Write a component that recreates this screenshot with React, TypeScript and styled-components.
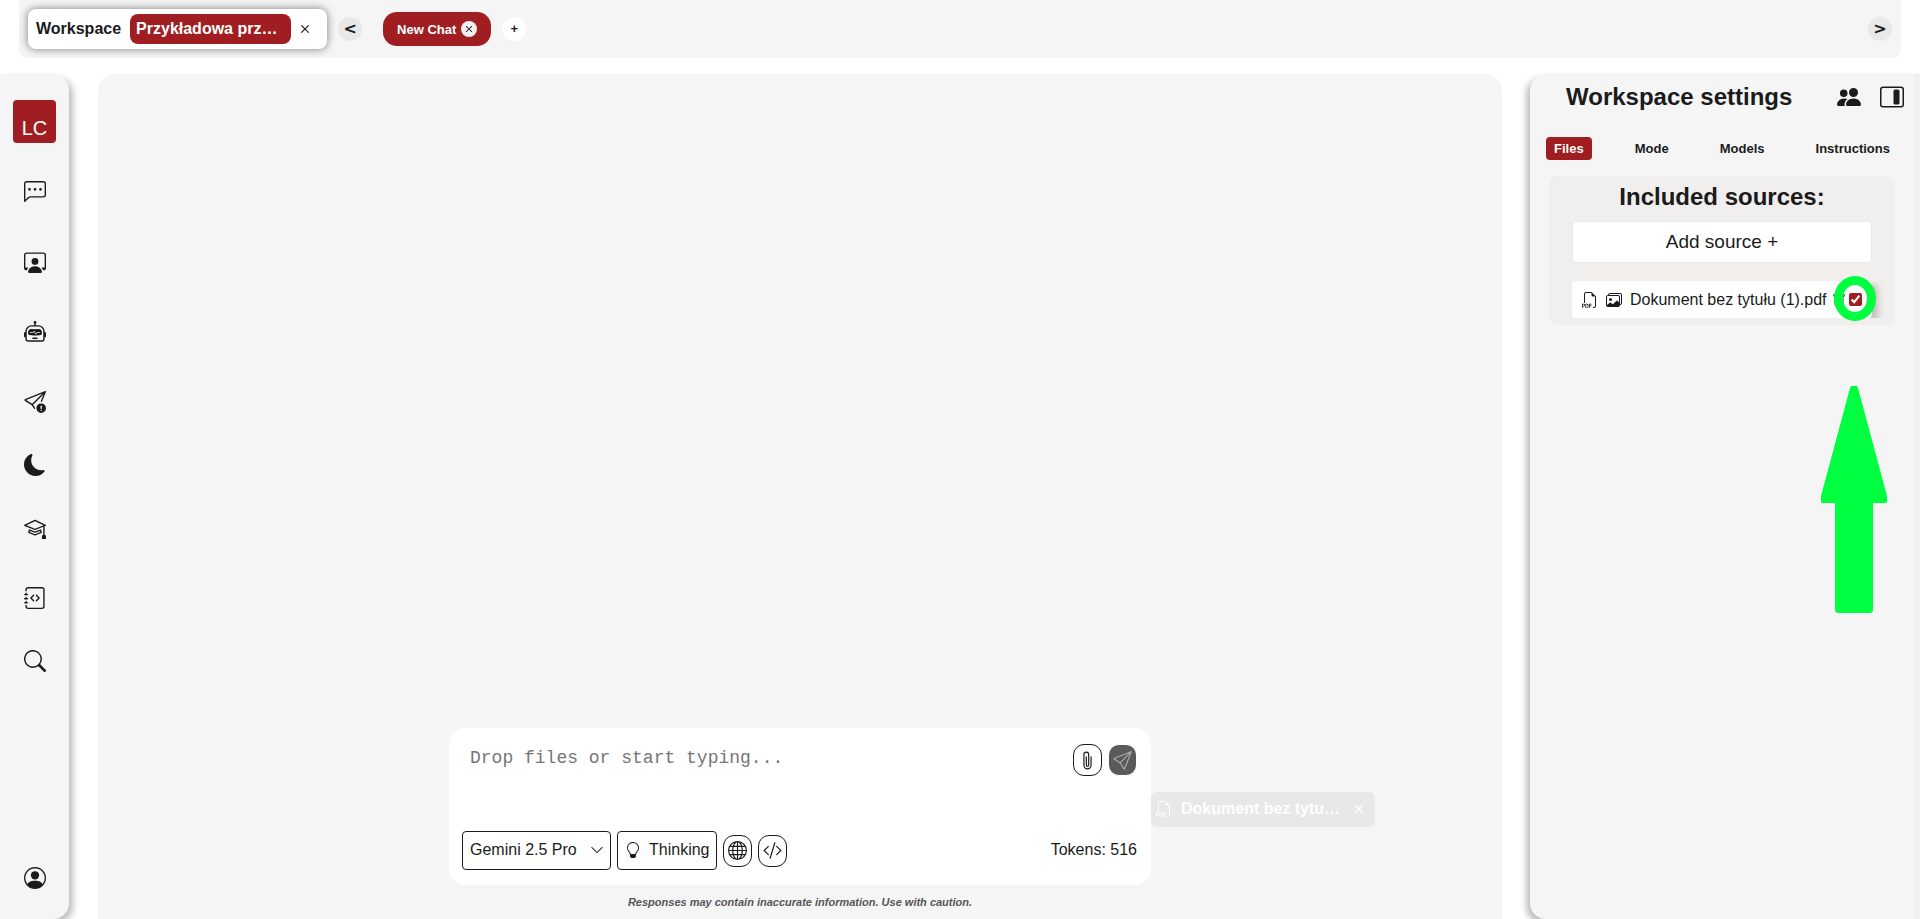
import React from "react";
import styled, { createGlobalStyle } from "styled-components";
import {
  BsChatLeftDots,
  BsChevronDown,
  BsCodeSlash,
  BsFiletypePdf,
  BsGlobe,
  BsImages,
  BsJournalCode,
  BsLayoutSidebarInsetReverse,
  BsLightbulb,
  BsMoonFill,
  BsMortarboard,
  BsPaperclip,
  BsPeopleFill,
  BsPersonCircle,
  BsPersonWorkspace,
  BsRobot,
  BsSearch,
  BsSend,
  BsSendExclamation,
  BsTrash,
  BsX,
} from "react-icons/bs";

const color = {
  panel: "#f5f5f5",
  ink: "#1b1b1b",
  red: "#a01d22",
  muted: "#e8e8e8",
  marker: "#00ff40",
};

const GlobalStyle = createGlobalStyle`
  *, *::before, *::after { box-sizing: border-box; }
  body { margin: 0; background: #fff; color: ${color.ink}; overflow: hidden; }
  body, button, select { font-family: "Liberation Sans", Arial, sans-serif; font-size: 16px; }
  button, select { margin: 0; padding: 0; border: 0; color: inherit; background: none; cursor: pointer; }
  svg { display: block; flex: none; }
`;

const Page = styled.div`
  display: flex;
  flex-direction: column;
  height: 100vh;
`;

const TopBar = styled.header`
  display: flex;
  align-items: center;
  margin: 0 19px 16px;
  padding: 9px;
  background: ${color.panel};
  border-radius: 0 0 8px 8px;
`;

const WorkspaceTab = styled.div`
  display: flex;
  align-items: center;
  height: 40px;
  padding: 0 14px 0 8px;
  gap: 6px;
  background: #fff;
  border-radius: 8px;
  box-shadow: 0 0 8px rgba(0, 0, 0, 0.5);
  font-weight: bold;
`;

const WorkspaceName = styled.button`
  height: 30px;
  width: 161px;
  margin-left: 3px;
  padding: 0 6px;
  text-align: left;
  font-weight: bold;
  color: #fff;
  background: ${color.red};
  border-radius: 8px;
`;

const CloseButton = styled.button`
  display: flex;
  align-items: center;
  justify-content: center;
  width: 16px;
  height: 16px;
`;

const RoundButton = styled.button<{ $fill: string }>`
  width: 24px;
  height: 24px;
  border-radius: 50%;
  background: ${(p) => p.$fill};
  font-size: 13px;
  line-height: 24px;
  font-weight: bold;
`;

const ArrowButton = styled(RoundButton)`
  font-family: "DejaVu Sans", sans-serif;
  font-size: 16px;
  line-height: 22px;
`;

const ChatTabs = styled.nav`
  display: flex;
  align-items: center;
  gap: 11px;
  flex: 1;
  margin-left: 11px;
`;

const ChatTab = styled.div`
  display: flex;
  align-items: center;
  gap: 5px;
  height: 34px;
  margin-left: 10px;
  padding: 0 14px;
  border-radius: 14px;
  color: #fff;
  background: ${color.red};
`;

const ChatName = styled.button`
  font-size: 13px;
  font-weight: bold;
`;

const ChatClose = styled(CloseButton)`
  border-radius: 50%;
  color: ${color.ink};
  background: #f0f0f0;
`;

const Body = styled.div`
  display: flex;
  flex: 1;
  min-height: 0;
`;

const Sidebar = styled.nav`
  display: flex;
  flex-direction: column;
  align-items: center;
  width: 69px;
  padding: 26px 0 30px;
  background: ${color.panel};
  border-radius: 0 16px 16px 0;
  box-shadow: 4px 4px 6px rgba(0, 0, 0, 0.25);
`;

const Logo = styled.a`
  display: flex;
  align-items: flex-end;
  justify-content: center;
  width: 43px;
  height: 43px;
  margin-bottom: 38px;
  padding-bottom: 3px;
  border-radius: 4px;
  color: #fff;
  background: ${color.red};
  font-size: 20px;
  text-decoration: none;
`;

const SideButton = styled.button<{ $tight?: boolean }>`
  margin-bottom: ${(p) => (p.$tight ? 41 : 48)}px;
`;

const AccountButton = styled.button`
  margin-top: auto;
`;

const Main = styled.main`
  display: flex;
  flex-direction: column;
  justify-content: flex-end;
  flex: 1;
  margin: 0 28px 0 29px;
  padding-bottom: 10px;
  background: ${color.panel};
  border-radius: 16px 16px 0 0;
`;

const ComposerRow = styled.div`
  display: grid;
  grid-template-columns: 1fr 50% 1fr;
`;

const Composer = styled.form`
  display: flex;
  flex-direction: column;
  justify-content: space-between;
  grid-column: 2;
  padding: 16px 14px 15px 13px;
  height: 157px;
  background: #fff;
  border-radius: 16px;
`;

const Line = styled.div<{ $top?: boolean }>`
  display: flex;
  align-items: ${(p) => (p.$top ? "flex-start" : "center")};
  gap: 6px;
`;

const Prompt = styled.textarea`
  flex: 1;
  height: 60px;
  padding: 3px 8px;
  border: 0;
  outline: 0;
  resize: none;
  color: ${color.ink};
  background: none;
  font: 18px/22px "Liberation Mono", "Courier New", monospace;
  &::placeholder { color: #767676; }
`;

const ToolButton = styled.button<{ $dark?: boolean }>`
  display: flex;
  align-items: center;
  justify-content: center;
  width: 29px;
  height: 32px;
  border: 1px solid ${(p) => (p.$dark ? "#fff" : color.ink)};
  border-radius: 11px;
  color: ${(p) => (p.$dark ? "#a8a8a8" : color.ink)};
  background: ${(p) => (p.$dark ? "#5a5a5a" : "#fff")};
`;

const ModelPicker = styled.label`
  position: relative;
  display: flex;
  width: 149px;
  svg {
    position: absolute;
    right: 7px;
    top: 12px;
    pointer-events: none;
  }
`;

const ModelSelect = styled.select`
  appearance: none;
  width: 100%;
  height: 39px;
  padding: 0 7px 2px;
  border: 1px solid ${color.ink};
  border-radius: 4px;
`;

const ThinkingButton = styled.button`
  display: flex;
  align-items: center;
  gap: 8px;
  height: 39px;
  padding: 0 7px 2px;
  border: 1px solid ${color.ink};
  border-radius: 4px;
`;

const Tokens = styled.span`
  margin-left: auto;
  padding-bottom: 2px;
`;

const Attachment = styled.div`
  display: flex;
  align-items: center;
  justify-self: start;
  height: 35px;
  margin-top: 64px;
  padding: 0 8px 2px 5px;
  gap: 9px;
  border-radius: 6px;
  color: #fff;
  background: ${color.muted};
  font-weight: bold;
  ${CloseButton} { margin-left: 2px; }
`;

const Disclaimer = styled.p`
  margin: 11px 0 0;
  text-align: center;
  color: #555;
  font-size: 11px;
  line-height: 13px;
  font-weight: bold;
  font-style: italic;
`;

const Settings = styled.aside`
  position: relative;
  width: 390px;
  padding: 9px 22px 0 16px;
  background: ${color.panel};
  border-right: 6px solid #f0f0f0;
  border-radius: 16px 0 0 16px;
  box-shadow: -4px 4px 6px rgba(0, 0, 0, 0.25);
`;

const SettingsHead = styled.div`
  display: flex;
  align-items: center;
  height: 28px;
  margin: 0 -12px 0 20px;
`;

const Heading = styled.h2`
  margin: 0;
  font-size: 24px;
  line-height: 28px;
`;

const HeadActions = styled.div`
  display: flex;
  gap: 19px;
  margin-left: auto;
`;

const SettingsTabs = styled.div`
  display: flex;
  justify-content: space-between;
  margin: 26px -6px 16px 0;
`;

const SettingsTab = styled.button<{ $active?: boolean }>`
  height: 23px;
  padding: 0 8px;
  border-radius: 4px;
  font-size: 13px;
  font-weight: bold;
  color: ${(p) => (p.$active ? "#fff" : color.ink)};
  background: ${(p) => (p.$active ? color.red : "none")};
`;

const Sources = styled.section`
  display: flex;
  flex-direction: column;
  margin: 0 -3px 0 3px;
  padding: 7px 23px;
  border-radius: 8px;
  background: #f0efee;
  text-align: center;
`;

const AddSource = styled.button`
  height: 42px;
  margin: 10px 0 18px;
  border: 1px solid #e8e8e8;
  border-radius: 4px;
  background: #fff;
  font-size: 19px;
`;

const SourceRow = styled.div`
  display: flex;
  align-items: center;
  height: 37px;
  padding: 0 10px;
  gap: 5px;
  border-radius: 4px;
  background: #fff;
  box-shadow: 6px 4px 6px rgba(0, 0, 0, 0.2);
  clip-path: inset(0 -12px 0 0);
`;

const SourceFile = styled.div`
  display: flex;
  align-items: center;
  gap: 8px;
`;

const SourceName = styled.label`
  white-space: nowrap;
`;

const SourceActions = styled.div`
  display: flex;
  align-items: center;
  gap: 3px;
`;

const SourceItem = styled.div`
  position: relative;
`;

const CheckMark = styled.svg`
  position: absolute;
  right: -4px;
  top: -5px;
  pointer-events: none;
`;

const Check = styled.input`
  width: 13px;
  height: 13px;
  margin: 0;
  accent-color: ${color.red};
`;

const ArrowMark = styled.svg`
  position: absolute;
  top: 312px;
  right: 27px;
`;

export default function App() {
  return (
    <>
      <GlobalStyle />
      <Page>
        <TopBar>
          <WorkspaceTab>
            <span>Workspace</span>
            <WorkspaceName>Przykładowa prz…</WorkspaceName>
            <CloseButton aria-label="Close workspace">
              <BsX size={18} />
            </CloseButton>
          </WorkspaceTab>
          <ChatTabs>
            <ArrowButton $fill={color.muted} aria-label="Previous chats">&lt;</ArrowButton>
            <ChatTab>
              <ChatName>New Chat</ChatName>
              <ChatClose aria-label="Close chat">
                <BsX size={14} />
              </ChatClose>
            </ChatTab>
            <RoundButton $fill="#fff" aria-label="Add chat">+</RoundButton>
          </ChatTabs>
          <ArrowButton $fill={color.muted} aria-label="Next chats">&gt;</ArrowButton>
        </TopBar>

        <Body>
          <Sidebar aria-label="Main">
            <Logo href="#">LC</Logo>
            <SideButton aria-label="Chats"><BsChatLeftDots size={22} /></SideButton>
            <SideButton aria-label="Workspaces"><BsPersonWorkspace size={22} /></SideButton>
            <SideButton aria-label="Assistants"><BsRobot size={22} /></SideButton>
            <SideButton $tight aria-label="Report"><BsSendExclamation size={22} /></SideButton>
            <SideButton $tight aria-label="Dark mode"><BsMoonFill size={22} /></SideButton>
            <SideButton aria-label="Tutorials"><BsMortarboard size={22} /></SideButton>
            <SideButton $tight aria-label="Documentation"><BsJournalCode size={22} /></SideButton>
            <SideButton $tight aria-label="Search"><BsSearch size={22} /></SideButton>
            <AccountButton aria-label="Account"><BsPersonCircle size={22} /></AccountButton>
          </Sidebar>

          <Main>
            <ComposerRow>
              <Composer onSubmit={(e) => e.preventDefault()}>
                <Line $top>
                  <Prompt aria-label="Message" placeholder="Drop files or start typing..." />
                  <ToolButton type="button" aria-label="Attach file">
                    <BsPaperclip size={19} />
                  </ToolButton>
                  <ToolButton $dark aria-label="Send">
                    <BsSend size={19} />
                  </ToolButton>
                </Line>
                <Line>
                  <ModelPicker>
                    <ModelSelect aria-label="Model">
                      <option>Gemini 2.5 Pro</option>
                    </ModelSelect>
                    <BsChevronDown size={14} />
                  </ModelPicker>
                  <ThinkingButton type="button">
                    <BsLightbulb size={16} />
                    Thinking
                  </ThinkingButton>
                  <ToolButton type="button" aria-label="Web search">
                    <BsGlobe size={19} />
                  </ToolButton>
                  <ToolButton type="button" aria-label="Code">
                    <BsCodeSlash size={19} />
                  </ToolButton>
                  <Tokens>Tokens: 516</Tokens>
                </Line>
              </Composer>
              <Attachment>
                <BsFiletypePdf size={16} />
                <span>Dokument bez tytu…</span>
                <CloseButton aria-label="Remove file">
                  <BsX size={20} />
                </CloseButton>
              </Attachment>
            </ComposerRow>
            <Disclaimer>Responses may contain inaccurate information. Use with caution.</Disclaimer>
          </Main>

          <Settings>
            <SettingsHead>
              <Heading>Workspace settings</Heading>
              <HeadActions>
                <button aria-label="Members"><BsPeopleFill size={24} /></button>
                <button aria-label="Toggle panel"><BsLayoutSidebarInsetReverse size={24} /></button>
              </HeadActions>
            </SettingsHead>
            <SettingsTabs>
              <SettingsTab $active>Files</SettingsTab>
              <SettingsTab>Mode</SettingsTab>
              <SettingsTab>Models</SettingsTab>
              <SettingsTab>Instructions</SettingsTab>
            </SettingsTabs>
            <Sources>
              <Heading>Included sources:</Heading>
              <AddSource>Add source +</AddSource>
              <SourceItem>
                <SourceRow>
                  <SourceFile>
                    <BsFiletypePdf size={16} />
                    <BsImages size={16} />
                    <SourceName htmlFor="source-1">Dokument bez tytułu (1).pdf</SourceName>
                  </SourceFile>
                  <SourceActions>
                    <button aria-label="Delete source"><BsTrash size={14} /></button>
                    <Check id="source-1" type="checkbox" defaultChecked />
                  </SourceActions>
                </SourceRow>
                <CheckMark width="42" height="45" viewBox="0 0 42 45" fill="none">
                  <ellipse cx="21" cy="22.5" rx="16.5" ry="18" stroke={color.marker} strokeWidth="9" />
                </CheckMark>
              </SourceItem>
            </Sources>
            <ArrowMark width="66" height="227" viewBox="0 0 66 227" fill={color.marker}>
              <path d="M30 0h6l1 2L66 110v6l-1 1H52v108l-2 2H16l-2-2V117H1l-1-1v-6L29 2z" />
            </ArrowMark>
          </Settings>
        </Body>
      </Page>
    </>
  );
}
